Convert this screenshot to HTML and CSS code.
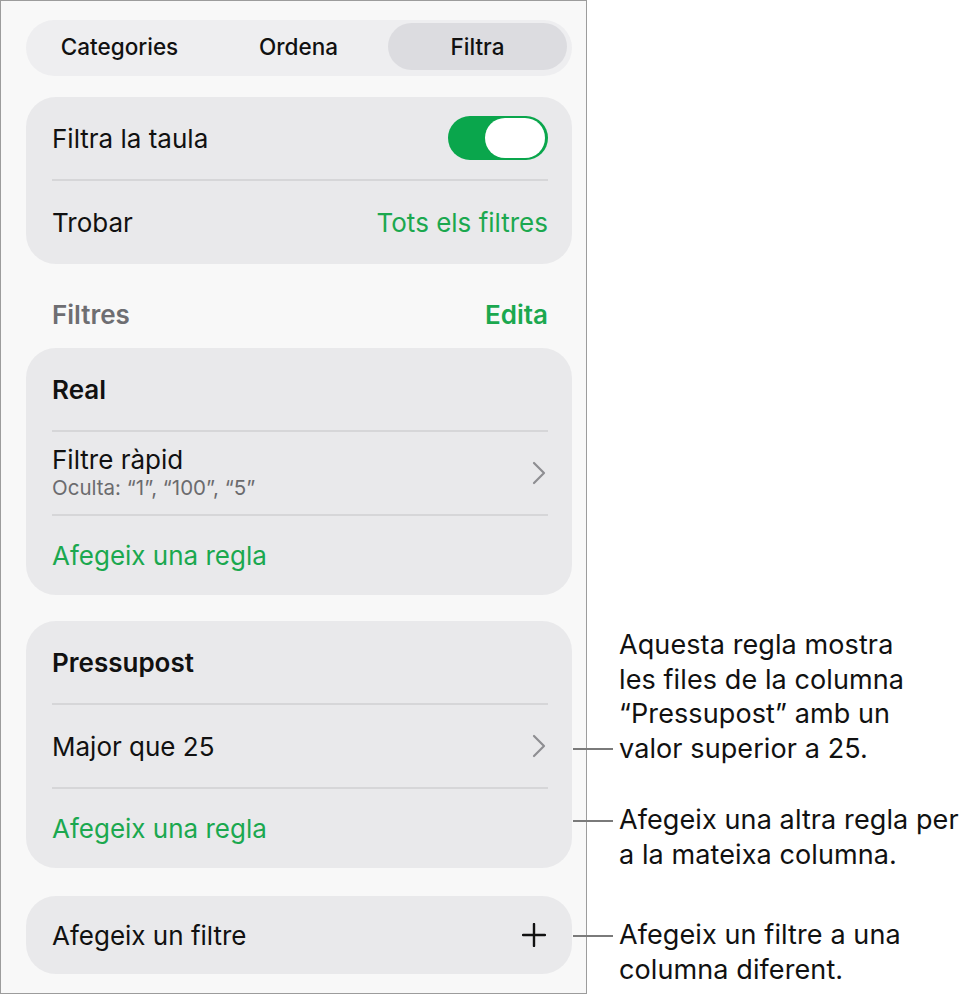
FILE: index.html
```html
<!DOCTYPE html>
<html lang="ca">
<head>
  <meta charset="UTF-8">
  <meta name="viewport" content="width=device-width, initial-scale=1.0">
  <title>Filtra</title>
  <link rel="stylesheet" href="styles.css">
</head>
<body>
  <div class="page">
    <div class="panel">
      <!-- Segmented control -->
      <div class="tabs">
        <div class="tab">Categories</div>
        <div class="tab">Ordena</div>
        <div class="tab active">Filtra</div>
      </div>

      <div class="card">
        <div class="row">
          <span class="label">Filtra la taula</span>
          <span class="toggle"><span class="knob"></span></span>
        </div>
        <div class="row">
          <span class="label">Trobar</span>
          <span class="link">Tots els filtres</span>
        </div>
      </div>

      <div class="section-head">
        <span class="section-title">Filtres</span>
        <span class="link bold">Edita</span>
      </div>

      <div class="card">
        <div class="row"><span class="label bold">Real</span></div>
        <div class="row">
          <div class="stack">
            <span class="label">Filtre ràpid</span>
            <span class="sub">Oculta: “1”, “100”, “5”</span>
          </div>
          <svg class="chevron" width="14" height="24" viewBox="0 0 14 24"><path d="M2 2 L12 12 L2 22" fill="none" stroke="#8e8e92" stroke-width="2.2" stroke-linecap="round" stroke-linejoin="round"/></svg>
        </div>
        <div class="row short"><span class="link">Afegeix una regla</span></div>
      </div>

      <div class="card second">
        <div class="row"><span class="label bold">Pressupost</span></div>
        <div class="row">
          <span class="label">Major que 25</span>
          <svg class="chevron" width="14" height="24" viewBox="0 0 14 24"><path d="M2 2 L12 12 L2 22" fill="none" stroke="#8e8e92" stroke-width="2.2" stroke-linecap="round" stroke-linejoin="round"/></svg>
        </div>
        <div class="row short"><span class="link">Afegeix una regla</span></div>
      </div>

      <div class="card single">
        <div class="row">
          <span class="label">Afegeix un filtre</span>
          <svg class="plus" width="24" height="24" viewBox="0 0 24 24"><path d="M12 1 V23 M1 12 H23" stroke="#111" stroke-width="2.4" stroke-linecap="round"/></svg>
        </div>
      </div>
    </div>

    <!-- Callouts -->
    <div class="callout c1">
      <span class="leader"></span>
      <p>Aquesta regla mostra<br>les files de la columna<br>“Pressupost” amb un<br>valor superior a 25.</p>
    </div>
    <div class="callout c2">
      <span class="leader"></span>
      <p>Afegeix una altra regla per<br>a la mateixa columna.</p>
    </div>
    <div class="callout c3">
      <span class="leader"></span>
      <p>Afegeix un filtre a una<br>columna diferent.</p>
    </div>
  </div>
</body>
</html>
```

FILE: styles.css
```css
body {
  margin: 0;
  background: #fff;
  font-family: Inter, "Noto Sans", sans-serif;
  color: #111;
}

.page {
  position: relative;
  width: 971px;
  height: 995px;
}

.panel {
  box-sizing: border-box;
  width: 587px;
  height: 994px;
  border: 1px solid #9c9c9c;
  background: #f8f8f8;
  padding: 19px 14px 0 25px;
  display: flex;
  flex-direction: column;
}

/* segmented control */
.tabs {
  height: 56px;
  box-sizing: border-box;
  background: #eeeef0;
  border-radius: 28px;
  padding: 3px 5px 6px 4px;
  display: grid;
  grid-template-columns: 1fr 1fr 1fr;
  align-items: center;
}

.tab {
  text-align: center;
  font-size: 22.5px;
  font-weight: 500;
  height: 47px;
  line-height: 47px;
  border-radius: 24px;
}

.tab.active {
  background: #dcdce0;
}

.card {
  margin-top: 21px;
  background: #e9e9eb;
  border-radius: 30px;
  padding: 0 24px 0 26px;
}

.card.second {
  margin-top: 26px;
}

.card.single {
  margin-top: 28px;
}

.section-head + .card {
  margin-top: 0;
}

.row {
  box-sizing: border-box;
  height: 84px;
  display: flex;
  align-items: center;
  justify-content: space-between;
  border-bottom: 2px solid #d6d6d8;
}

.row:last-child {
  border-bottom: none;
  height: 83px;
}

.row.short {
  height: 79px;
}

.single .row {
  height: 78px;
}

.label {
  font-size: 26px;
}

.bold {
  font-weight: 600;
}

.link {
  font-size: 26px;
  color: #1ba84f;
}

.stack {
  display: flex;
  flex-direction: column;
  margin-top: -2px;
}

.sub {
  font-size: 20.5px;
  color: #6b6b6e;
}

.chevron {
  margin-right: 2px;
}

.plus {
  margin-right: 2px;
}

.toggle {
  width: 100px;
  height: 44px;
  border-radius: 22px;
  background: #0aa64c;
  box-sizing: border-box;
  padding: 2px 3px;
  display: flex;
  justify-content: flex-end;
}

.knob {
  width: 60px;
  height: 40px;
  border-radius: 20px;
  background: #fff;
}

.section-head {
  display: flex;
  justify-content: space-between;
  align-items: center;
  height: 84px;
  padding: 16px 24px 0 26px;
  box-sizing: border-box;
}

.section-title {
  font-size: 26px;
  font-weight: 600;
  color: #6e6e72;
}

/* annotations */
.callout {
  position: absolute;
  left: 573px;
  display: flex;
  align-items: flex-start;
}

.callout p {
  margin: 0;
  font-size: 27px;
  line-height: 34.5px;
  letter-spacing: 0.1px;
  color: #111;
}

.leader {
  width: 40px;
  height: 2px;
  background: #7a7a7a;
  margin-right: 6px;
}

.c1 {
  top: 628px;
}

.c1 .leader {
  margin-top: 120px;
}

.c2 {
  top: 803px;
}

.c2 .leader {
  margin-top: 17px;
}

.c3 {
  top: 918px;
}

.c3 .leader {
  margin-top: 17px;
}
```
